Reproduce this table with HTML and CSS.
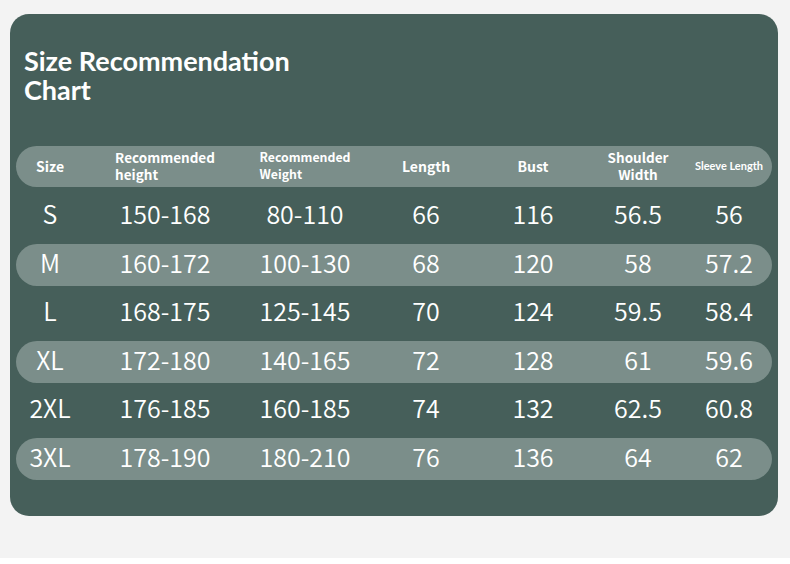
FILE: index.html
```html
<!DOCTYPE html>
<html lang="en">
<head>
<meta charset="utf-8">
<title>Size Recommendation Chart</title>
<link rel="stylesheet" href="styles.css">
</head>
<body>
<div class="page">
  <section class="card">
    <h1 class="title">Size Recommendation<br>Chart</h1>
    <div class="table">
      <div class="row head">
        <div class="cell"><span>Size</span></div>
        <div class="cell"><span class="two">Recommended<br>height</span></div>
        <div class="cell"><span class="two narrow">Recommended<br>Weight</span></div>
        <div class="cell"><span>Length</span></div>
        <div class="cell"><span>Bust</span></div>
        <div class="cell"><span class="mid">Shoulder<br>Width</span></div>
        <div class="cell"><span class="small">Sleeve Length</span></div>
      </div>
      <div class="row">
        <div class="cell">S</div><div class="cell">150-168</div><div class="cell">80-110</div><div class="cell">66</div><div class="cell">116</div><div class="cell">56.5</div><div class="cell">56</div>
      </div>
      <div class="row band">
        <div class="cell">M</div><div class="cell">160-172</div><div class="cell">100-130</div><div class="cell">68</div><div class="cell">120</div><div class="cell">58</div><div class="cell">57.2</div>
      </div>
      <div class="row">
        <div class="cell">L</div><div class="cell">168-175</div><div class="cell">125-145</div><div class="cell">70</div><div class="cell">124</div><div class="cell">59.5</div><div class="cell">58.4</div>
      </div>
      <div class="row band">
        <div class="cell">XL</div><div class="cell">172-180</div><div class="cell">140-165</div><div class="cell">72</div><div class="cell">128</div><div class="cell">61</div><div class="cell">59.6</div>
      </div>
      <div class="row">
        <div class="cell">2XL</div><div class="cell">176-185</div><div class="cell">160-185</div><div class="cell">74</div><div class="cell">132</div><div class="cell">62.5</div><div class="cell">60.8</div>
      </div>
      <div class="row band">
        <div class="cell">3XL</div><div class="cell">178-190</div><div class="cell">180-210</div><div class="cell">76</div><div class="cell">136</div><div class="cell">64</div><div class="cell">62</div>
      </div>
    </div>
  </section>
</div>
</body>
</html>
```
FILE: styles.css
```css
html, body {
  margin: 0;
  padding: 0;
  background: #ffffff;
}
.page {
  width: 790px;
  height: 558px;
  background: #f3f3f3;
  padding: 14px 12px 0 10px;
  box-sizing: border-box;
}
.card {
  width: 768px;
  height: 502px;
  background: #465f5a;
  border-radius: 19px;
  box-sizing: border-box;
  padding: 32px 6px 0 6px;
  color: #ffffff;
}
.title {
  margin: 0 0 0 8px;
  font-family: Lato, "Liberation Sans", sans-serif;
  font-weight: 700;
  font-size: 27px;
  line-height: 29px;
  height: 100px;
}
.table {
  display: flex;
  flex-direction: column;
  gap: 6.5px;
}
.row {
  display: grid;
  grid-template-columns: 68px 162px 118px 124px 90px 120px 62px;
  height: 42px;
  border-radius: 21px;
  font-family: "Noto Sans CJK SC", "Noto Sans", sans-serif;
  font-weight: 350;
  font-size: 25px;
}
.row.head {
  height: 41px;
  margin-bottom: 2px;
  background: #7b8e8a;
  font-weight: 700;
  font-size: 14px;
}
.row.band {
  background: #7b8e8a;
}
.cell {
  display: flex;
  align-items: center;
  justify-content: center;
  white-space: nowrap;
  line-height: 1;
  padding-bottom: 6px;
}
.head .cell {
  padding-bottom: 0;
}
.head .cell span {
  display: block;
  line-height: 17px;
}
.head .cell .two {
  text-align: left;
  font-size: 13.5px;
  margin-top: -2px;
}
.head .cell .two.narrow {
  font-size: 12.3px;
}
.head .cell .mid {
  text-align: center;
  font-size: 13.5px;
  margin-top: -2px;
}
.head .cell .small {
  font-family: Lato, "Noto Sans", sans-serif;
  font-size: 11px;
  margin-top: -3px;
}
```
